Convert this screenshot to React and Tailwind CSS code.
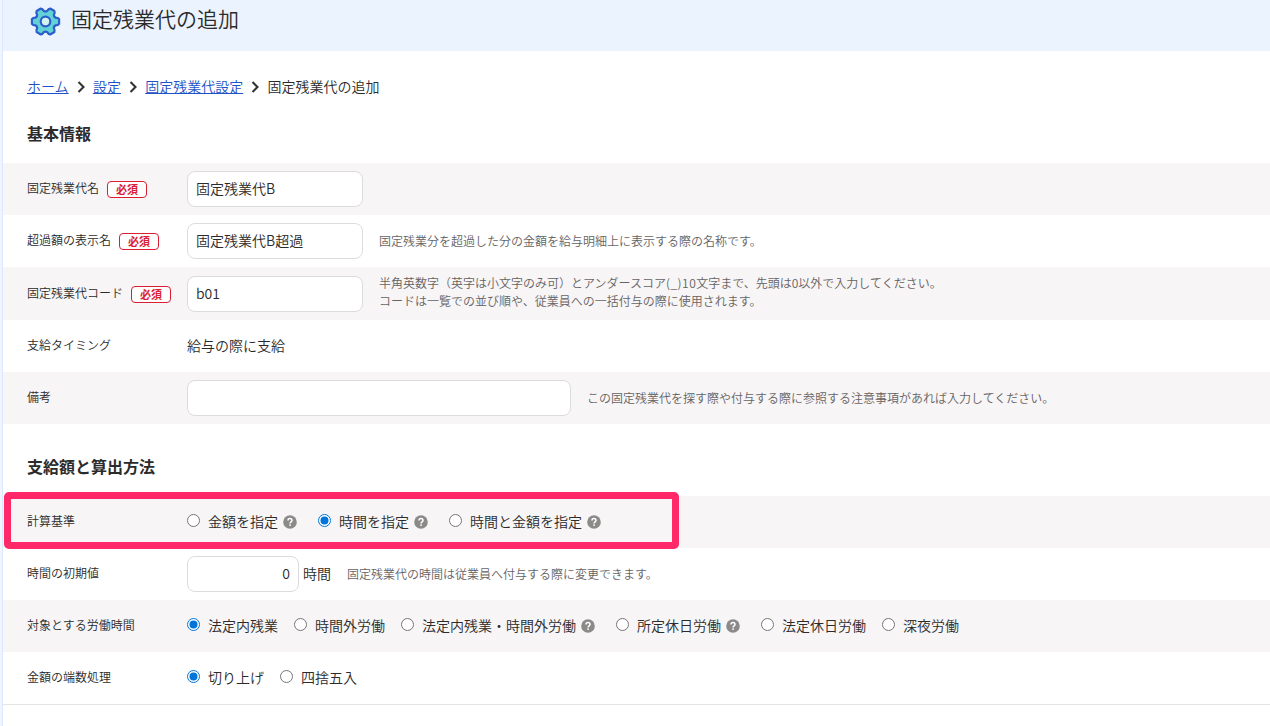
import React from "react";

const point = (deg, r) => {
  const a = (deg * Math.PI) / 180;
  return `${(15.5 + r * Math.cos(a)).toFixed(2)} ${(15.5 + r * Math.sin(a)).toFixed(2)}`;
};

const gearPath =
  [0, 60, 120, 180, 240, 300]
    .map(
      (a, i) =>
        `${i ? "L" : "M"}${point(a - 21, 10.8)} Q${point(a - 17, 13.2)} ${point(a - 10, 13.8)} L${point(a + 10, 13.8)} Q${point(a + 17, 13.2)} ${point(a + 21, 10.8)} Q${point(a + 30, 9.4)} ${point(a + 39, 10.8)}`
    )
    .join(" ") + "Z";

function Gear() {
  return (
    <svg className="h-[31px] w-[31px] shrink-0" viewBox="0 0 31 31">
      <path d={gearPath} fill="#62d2d6" stroke="#2c5fcb" strokeWidth="2.2" strokeLinejoin="round" />
      <circle cx="15.5" cy="15.5" r="4.8" fill="#d3f3f3" stroke="#2c5fcb" strokeWidth="2.2" />
    </svg>
  );
}

function Help() {
  return (
    <svg className="ml-[5px] mr-[5px] h-3.5 w-3.5 shrink-0" viewBox="0 0 14 14">
      <circle cx="7" cy="7" r="6.8" fill="#8c8989" />
      <path d="M5 5.6C5 4.3 5.8 3.6 7 3.6s2 .7 2 1.8c0 1.4-1.9 1.4-1.9 3" fill="none" stroke="#fff" strokeWidth="1.5" />
      <rect x="6.3" y="9.4" width="1.6" height="1.5" fill="#fff" />
    </svg>
  );
}

function Chevron() {
  return (
    <svg className="ml-2 mr-[8.3px] h-3 w-2" viewBox="0 0 8 12">
      <path d="M1.500 1 6.500 6l-5 5" fill="none" stroke="#333" strokeWidth="2.1" />
    </svg>
  );
}

function Radio({ label, checked, help }) {
  return (
    <label className="mr-4 flex items-center whitespace-nowrap text-sm leading-5">
      <svg className="mb-1 mr-2 h-[13px] w-[13px] shrink-0" viewBox="0 0 13 13">
        <circle cx="6.5" cy="6.5" r="6" fill="#fff" stroke={checked ? "#0075d7" : "#767676"} />
        {checked && <circle cx="6.5" cy="6.5" r="4" fill="#0075d7" />}
      </svg>
      <span className="pb-0.5">{label}</span>
      {help && <Help />}
    </label>
  );
}

function Row({ label, required, shaded, tall, children }) {
  return (
    <div className={`flex items-center pl-6 ${shaded ? "bg-[#f7f5f6]" : "bg-white"} ${tall ? "h-[53px]" : "h-[52px]"}`}>
      <div className={`flex w-40 shrink-0 items-center text-xs leading-[18px] ${tall ? "pt-px" : ""}`}>
        <span className="pb-0.5">{label}</span>
        {required && (
          <span className="ml-2 flex h-[17px] w-10 items-center justify-center rounded-[4px] border border-[#dc1e32] bg-white text-[11px] font-bold leading-none text-[#dc1e32]">
            必須
          </span>
        )}
      </div>
      {children}
    </div>
  );
}

function Field({ value, className }) {
  return (
    <input
      type="text"
      defaultValue={value}
      className={`h-9 shrink-0 rounded-lg border border-[#dcdcdc] bg-white px-2 pb-0.5 text-sm ${className}`}
    />
  );
}

function Hint({ children, className = "" }) {
  return <p className={`ml-4 whitespace-nowrap text-xs leading-[18px] text-[#666363] ${className}`}>{children}</p>;
}

function Crumb({ children }) {
  return (
    <a href="#" className="pb-0.5 text-[#1f52c6] underline">
      {children}
    </a>
  );
}

export default function App() {
  return (
    <div className="flex h-[726px] w-[1270px] overflow-hidden bg-white font-['Noto_Sans_CJK_JP',sans-serif] font-[350] text-[#2b2b2b]">
      <div className="w-[3px] shrink-0 border-r border-[#dce8ff] bg-[#f0f5ff]" />
      <main className="min-w-0 flex-1">
        <header className="flex h-[51px] items-start bg-[#ebf3ff] pl-[26.5px] pt-[5.5px]">
          <Gear />
          <h1 className="-mt-[0.5px] ml-[10.5px] text-[21px] leading-[26px]">固定残業代の追加</h1>
        </header>
        <nav className="flex h-[72px] items-center pl-6 text-sm leading-5">
          <Crumb>ホーム</Crumb>
          <Chevron />
          <Crumb>設定</Crumb>
          <Chevron />
          <Crumb>固定残業代設定</Crumb>
          <Chevron />
          <span className="pb-0.5">固定残業代の追加</span>
        </nav>
        <h2 className="h-10 pl-6 text-base font-bold leading-5">基本情報</h2>
        <Row label="固定残業代名" required shaded>
          <Field value="固定残業代B" className="w-44" />
        </Row>
        <Row label="超過額の表示名" required>
          <Field value="固定残業代B超過" className="w-44" />
          <Hint>固定残業分を超過した分の金額を給与明細上に表示する際の名称です。</Hint>
        </Row>
        <Row label="固定残業代コード" required shaded tall>
          <Field value="b01" className="w-44" />
          <Hint className="pb-[3px]">
            半角英数字（英字は小文字のみ可）とアンダースコア<span className="tracking-[0.5px]">(_)10</span>文字まで、先頭は0以外で入力してください。
            <br />
            コードは一覧での並び順や、従業員への一括付与の際に使用されます。
          </Hint>
        </Row>
        <Row label="支給タイミング">
          <span className="pb-0.5 text-sm">給与の際に支給</span>
        </Row>
        <Row label="備考" shaded>
          <Field value="" className="w-96" />
          <Hint>この固定残業代を探す際や付与する際に参照する注意事項があれば入力してください。</Hint>
        </Row>
        <h2 className="h-[72px] pl-6 pt-8 text-base font-bold leading-5">支給額と算出方法</h2>
        <div className="relative">
          <Row label="計算基準" shaded>
            <Radio label="金額を指定" help />
            <Radio label="時間を指定" checked help />
            <Radio label="時間と金額を指定" help />
          </Row>
          <div className="absolute -top-1 left-px h-[57px] w-[675px] rounded-[5px] border-[7px] border-[#ff2869]" />
        </div>
        <Row label="時間の初期値">
          <Field value="0" className="w-28 text-right" />
          <span className="ml-1 pb-0.5 text-sm">時間</span>
          <Hint>固定残業代の時間は従業員へ付与する際に変更できます。</Hint>
        </Row>
        <Row label="対象とする労働時間" shaded>
          <Radio label="法定内残業" checked />
          <Radio label="時間外労働" />
          <Radio label="法定内残業・時間外労働" help />
          <Radio label="所定休日労働" help />
          <Radio label="法定休日労働" />
          <Radio label="深夜労働" />
        </Row>
        <Row label="金額の端数処理">
          <Radio label="切り上げ" checked />
          <Radio label="四捨五入" />
        </Row>
        <div className="border-t border-[#e4e4e4]" />
      </main>
    </div>
  );
}
